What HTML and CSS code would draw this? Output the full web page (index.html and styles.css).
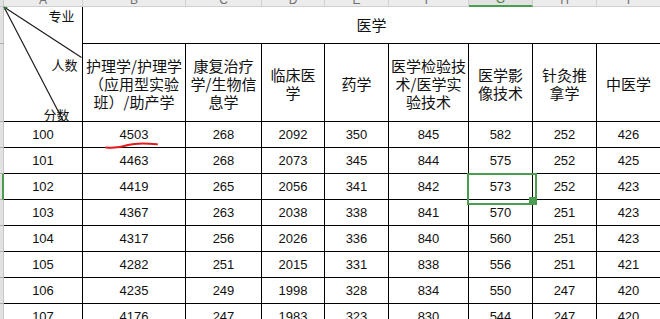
FILE: index.html
```html
<!DOCTYPE html>
<html lang="zh">
<head>
<meta charset="utf-8">
<title>医学</title>
<link rel="stylesheet" href="styles.css">
</head>
<body>
<div class="sheet">
  <div class="corner-hd"></div>
  <div class="ch"><span>A</span></div>
  <div class="ch"><span>B</span></div>
  <div class="ch"><span>C</span></div>
  <div class="ch"><span>D</span></div>
  <div class="ch"><span>E</span></div>
  <div class="ch"><span>F</span></div>
  <div class="ch sel"><span>G</span></div>
  <div class="ch"><span>H</span></div>
  <div class="ch"><span>I</span></div>

  <div class="rh"></div>
  <div class="c diag">
    <svg class="diag-lines" width="79" height="115" viewBox="0 0 79 115">
      <line x1="0" y1="0" x2="77.5" y2="50.5"/>
      <line x1="0" y1="0" x2="59.5" y2="114.5"/>
      <polygon class="mark" points="0,0 4,0 0,3"/>
    </svg>
    <div class="lab lab-major">专业</div>
    <div class="lab lab-count">人数</div>
    <div class="lab lab-score">分数</div>
  </div>
  <div class="c group"><span>医学</span></div>

  <div class="rh"></div>
  <div class="c hd"><span>护理学/护理学<br>（应用型实验<br>班）/助产学</span></div>
  <div class="c hd"><span>康复治疗<br>学/生物信<br>息学</span></div>
  <div class="c hd"><span>临床医<br>学</span></div>
  <div class="c hd"><span>药学</span></div>
  <div class="c hd"><span>医学检验技<br>术/医学实<br>验技术</span></div>
  <div class="c hd"><span>医学影<br>像技术</span></div>
  <div class="c hd"><span>针灸推<br>拿学</span></div>
  <div class="c hd"><span>中医学</span></div>

  <div class="rh"></div>
  <div class="c num">100</div>
  <div class="c num marked">4503<svg class="squiggle" width="54" height="8" viewBox="0 0 54 8"><path d="M1 5.5 C 8 6, 16 5.5, 23 3 C 30 1, 42 1.2, 52 2.2"/></svg></div>
  <div class="c num">268</div>
  <div class="c num">2092</div>
  <div class="c num">350</div>
  <div class="c num">845</div>
  <div class="c num">582</div>
  <div class="c num">252</div>
  <div class="c num">426</div>

  <div class="rh"></div>
  <div class="c num">101</div>
  <div class="c num">4463</div>
  <div class="c num">268</div>
  <div class="c num">2073</div>
  <div class="c num">345</div>
  <div class="c num">844</div>
  <div class="c num">575</div>
  <div class="c num">252</div>
  <div class="c num">425</div>

  <div class="rh sel"></div>
  <div class="c num">102</div>
  <div class="c num">4419</div>
  <div class="c num">265</div>
  <div class="c num">2056</div>
  <div class="c num">341</div>
  <div class="c num">842</div>
  <div class="c num active">573</div>
  <div class="c num">252</div>
  <div class="c num">423</div>

  <div class="rh"></div>
  <div class="c num">103</div>
  <div class="c num">4367</div>
  <div class="c num">263</div>
  <div class="c num">2038</div>
  <div class="c num">338</div>
  <div class="c num">841</div>
  <div class="c num">570</div>
  <div class="c num">251</div>
  <div class="c num">423</div>

  <div class="rh"></div>
  <div class="c num">104</div>
  <div class="c num">4317</div>
  <div class="c num">256</div>
  <div class="c num">2026</div>
  <div class="c num">336</div>
  <div class="c num">840</div>
  <div class="c num">560</div>
  <div class="c num">251</div>
  <div class="c num">423</div>

  <div class="rh"></div>
  <div class="c num">105</div>
  <div class="c num">4282</div>
  <div class="c num">251</div>
  <div class="c num">2015</div>
  <div class="c num">331</div>
  <div class="c num">838</div>
  <div class="c num">556</div>
  <div class="c num">251</div>
  <div class="c num">421</div>

  <div class="rh"></div>
  <div class="c num">106</div>
  <div class="c num">4235</div>
  <div class="c num">249</div>
  <div class="c num">1998</div>
  <div class="c num">328</div>
  <div class="c num">834</div>
  <div class="c num">550</div>
  <div class="c num">247</div>
  <div class="c num">420</div>

  <div class="rh"></div>
  <div class="c num">107</div>
  <div class="c num">4176</div>
  <div class="c num">247</div>
  <div class="c num">1983</div>
  <div class="c num">323</div>
  <div class="c num">830</div>
  <div class="c num">544</div>
  <div class="c num">247</div>
  <div class="c num">420</div>
</div>
</body>
</html>
```

FILE: styles.css
```css
* { box-sizing: border-box; }
html, body { margin: 0; padding: 0; background: #fff; }
body {
  width: 660px;
  height: 319px;
  overflow: hidden;
  font-family: "Liberation Sans", Arial, sans-serif;
  color: #000;
}
.sheet {
  display: grid;
  grid-template-columns: 4px 79px 103px 76px 63px 64px 80px 64px 64px 64px;
  grid-template-rows: 7px 37px 78px repeat(8, 26px);
  width: 661px;
}
.corner-hd {
  background: #e2e2e2;
  border-right: 1px solid #c8c8c8;
  border-bottom: 1px solid #c8c8c8;
}
.ch {
  background: #ececec;
  border-right: 1px solid #d0d0d0;
  border-bottom: 1px solid #d0d0d0;
  display: flex;
  align-items: flex-end;
  justify-content: center;
  overflow: hidden;
  font-size: 12px;
  line-height: 12px;
  color: #707070;
}
.ch span { display: block; height: 12px; flex: none; }
.ch.sel {
  border-bottom: 2px solid #4a9c4e;
  color: #3f7f43;
  background: #e2e2e2;
}
.rh {
  background: #e2e2e2;
  border-right: 1px solid #c6c6c6;
  border-bottom: 1px solid #a9a9a9;
}
.rh.sel { border-right: 2px solid #4a9c4e; }

.c {
  border-right: 1px solid #000;
  border-bottom: 1px solid #000;
  display: flex;
  align-items: center;
  justify-content: center;
  text-align: center;
}
.num { font-size: 13px; color: #111; }
.hd, .group, .diag {
  font-family: "Noto Sans CJK SC", "Noto Sans", sans-serif;
  font-size: 15px;
  line-height: 18px;
  color: #111;
}
.hd { padding-top: 3px; }
.group { grid-column: span 8; }

.diag {
  grid-row: span 2;
  position: relative;
  display: block;
  overflow: visible;
}
.diag-lines {
  position: absolute;
  left: 0;
  top: 0;
  overflow: visible;
}
.diag-lines line { stroke: #1c1c1c; stroke-width: 1.2; }
.diag-lines .mark { fill: #2f7a34; }
.lab { white-space: nowrap; font-size: 13px; }
.lab-major { padding-left: 37px; margin-top: 0; }
.lab-count { padding-left: 43px; margin-top: 31px; }
.lab-score { padding-left: 27px; margin-top: 32px; }

.marked { position: relative; }
.squiggle {
  position: absolute;
  left: 22px;
  top: 20px;
  overflow: visible;
}
.squiggle path {
  fill: none;
  stroke: #e3191b;
  stroke-width: 2;
  stroke-linecap: round;
}

.active { position: relative; }
.active::after {
  content: "";
  position: absolute;
  left: -2px;
  top: -1px;
  width: 66px;
  height: 28px;
  border: 2px solid #4a9c4e;
}
.active::before {
  content: "";
  position: absolute;
  left: 60px;
  top: 23px;
  width: 6px;
  height: 6px;
  background: #4a9c4e;
  z-index: 1;
}
```
